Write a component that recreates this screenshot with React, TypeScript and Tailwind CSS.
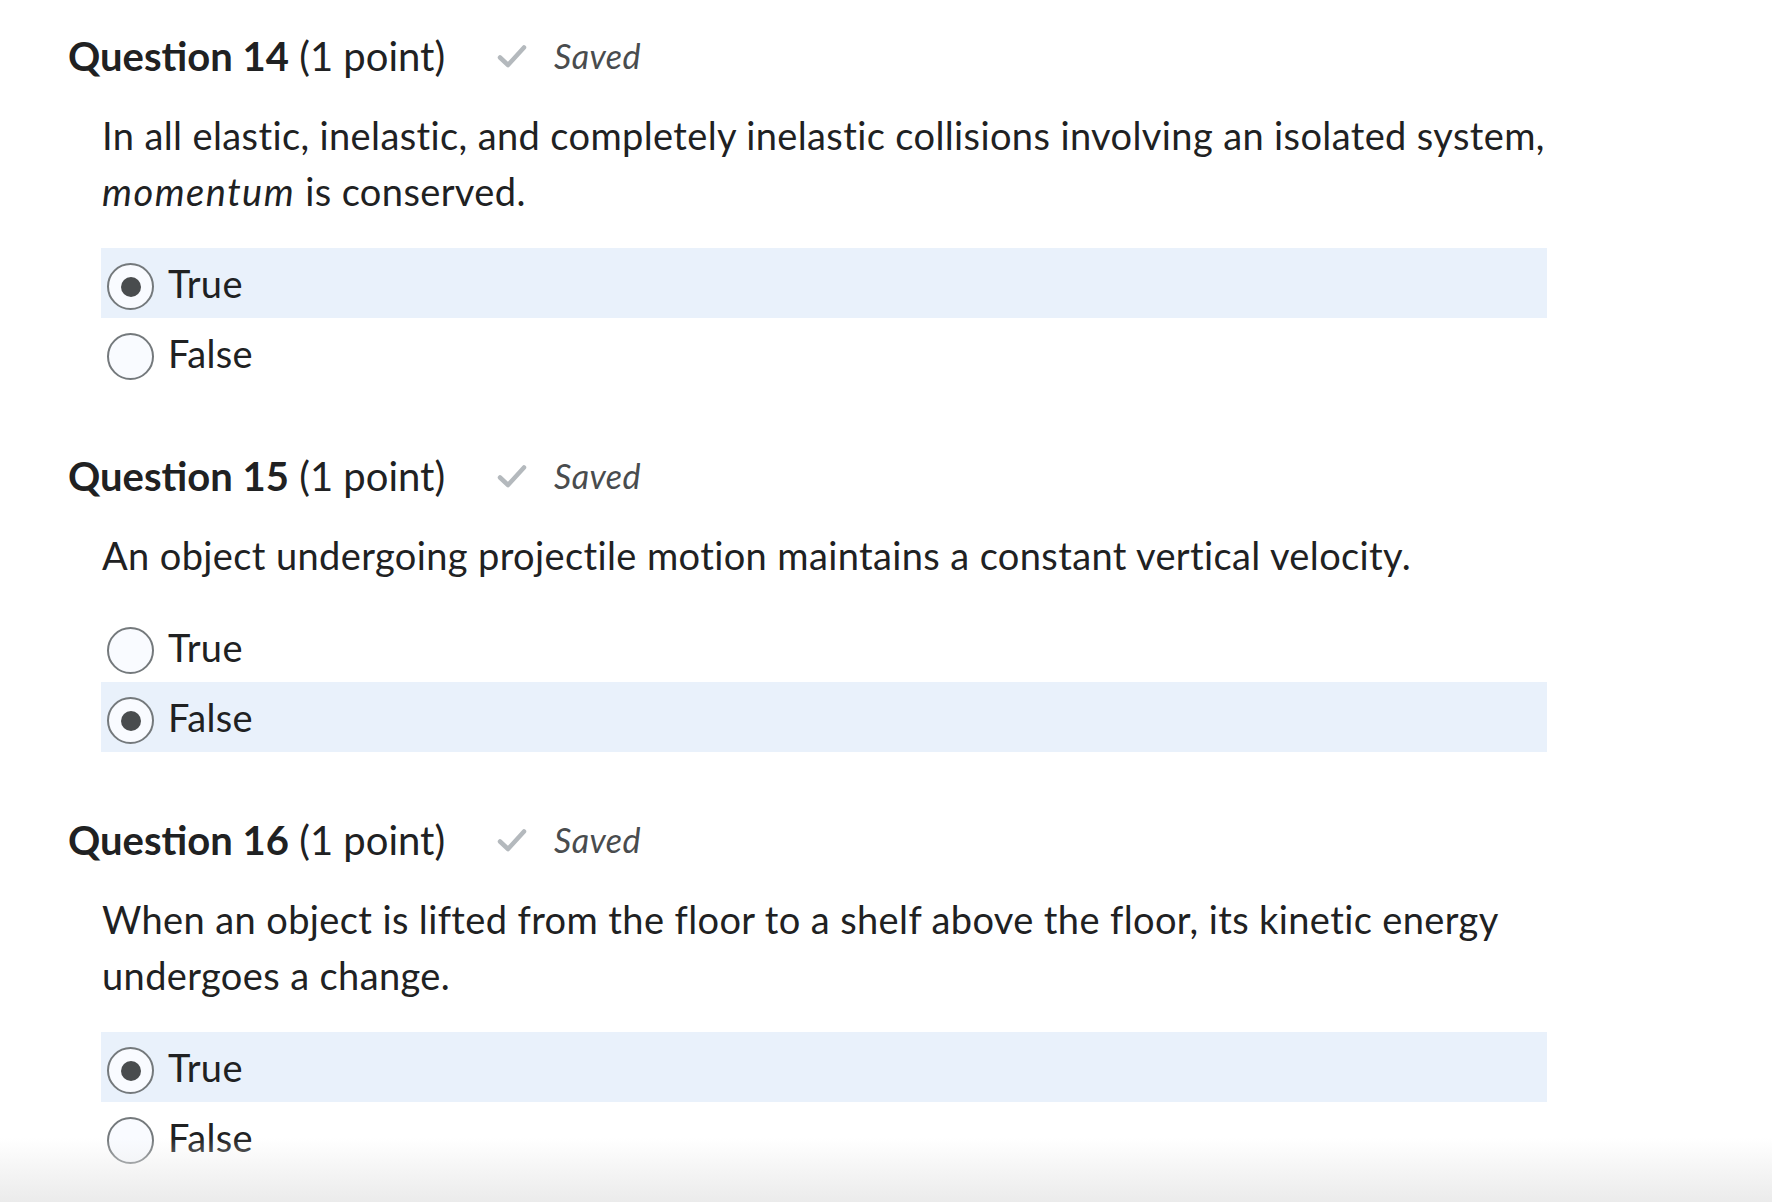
import React from 'react';

type Question = {
    number: number;
    body: React.ReactNode;
    selected: 'True' | 'False';
};

const QUESTIONS: Question[] = [
    {
        number: 14,
        body: (
            <>
                In all elastic, inelastic, and completely inelastic collisions involving an isolated system,{' '}
                <em className="tracking-[1.5px]">momentum</em> is conserved.
            </>
        ),
        selected: 'True',
    },
    {
        number: 15,
        body: <>An object undergoing projectile motion maintains a constant vertical velocity.</>,
        selected: 'False',
    },
    {
        number: 16,
        body: <>When an object is lifted from the floor to a shelf above the floor, its kinetic energy undergoes a change.</>,
        selected: 'True',
    },
];

const CheckIcon: React.FC = () => (
    <svg width="30" height="24" viewBox="0 0 30 24" fill="none" className="shrink-0">
        <path d="M3 13.5L11 21L27 3.5" stroke="#b4b9bd" strokeWidth="4.5" strokeLinecap="round" strokeLinejoin="round" />
    </svg>
);

const Radio: React.FC<{ checked: boolean }> = ({ checked }) => (
    <span className="mt-[7px] flex h-[47px] w-[47px] shrink-0 items-center justify-center rounded-full border-2 border-[#74797c] bg-[#f9fbff]">
        {checked && <span className="h-[20px] w-[20px] rounded-full bg-[#494c4e]" />}
    </span>
);

const Option: React.FC<{ label: string; checked: boolean }> = ({ label, checked }) => (
    <label className={`flex h-[70px] items-center gap-[14px] pl-[6px] ${checked ? 'bg-[#e9f1fb]' : ''}`}>
        <Radio checked={checked} />
        <span className="text-[38px] leading-[56px] tracking-[0.38px] text-[#202122]">{label}</span>
    </label>
);

const QuestionBlock: React.FC<{ q: Question }> = ({ q }) => (
    <section className="mb-[58px]">
        <h2 className="flex h-[60px] items-center pl-[68px] text-[40px] leading-[60px] text-[#202122]">
            <span>
                <span className="font-bold">Question {q.number}</span> (1 point)
            </span>
            <span className="ml-[52px] flex items-center">
                <CheckIcon />
            </span>
            <span className="ml-[27px] text-[34px] italic tracking-[0.4px] text-[#494c4e]">Saved</span>
        </h2>
        <div className="ml-[101px] w-[1446px]">
            <p className="mt-[21px] pl-[1px] text-[38px] leading-[56px] tracking-[0.38px] text-[#202122]">{q.body}</p>
            <div className="mt-[29px]">
                <Option label="True" checked={q.selected === 'True'} />
                <Option label="False" checked={q.selected === 'False'} />
            </div>
        </div>
    </section>
);

const App: React.FC = () => {
    return (
        <div className="relative h-[1202px] w-full overflow-hidden bg-white font-['Lato',sans-serif]">
            <div className="pt-[26px]">
                {QUESTIONS.map(q => (
                    <QuestionBlock key={q.number} q={q} />
                ))}
            </div>
            <div className="pointer-events-none absolute inset-x-0 bottom-0 h-[64px] bg-gradient-to-b from-white/0 to-[#ebebeb]" />
        </div>
    );
};

export default App;
